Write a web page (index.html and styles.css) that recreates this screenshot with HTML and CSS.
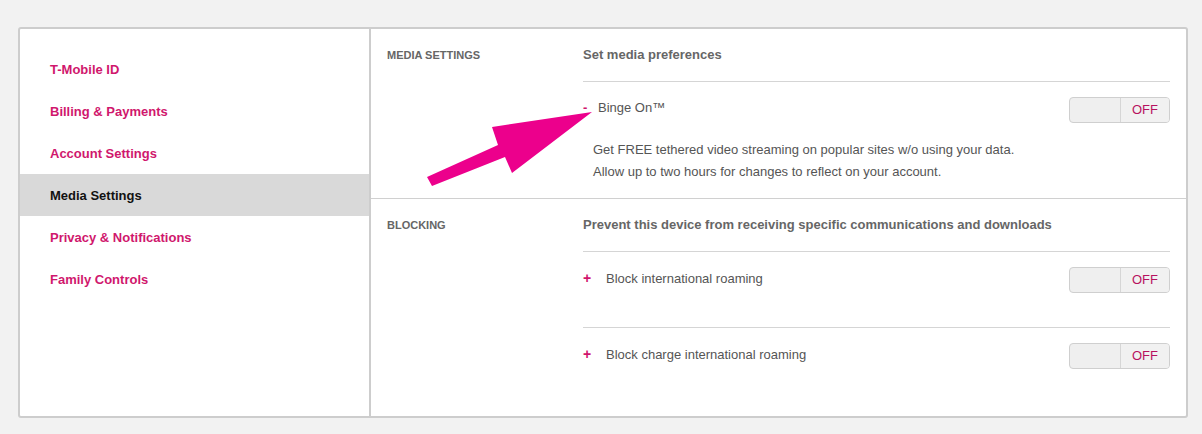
FILE: index.html
```html
<!DOCTYPE html>
<html lang="en">
<head>
  <meta charset="UTF-8" />
  <meta name="viewport" content="width=device-width, initial-scale=1.0" />
  <title>Media Settings</title>
  <link rel="stylesheet" href="styles.css">
</head>
<body>
  <div class="card">
    <!-- Side navigation -->
    <ul class="side-nav">
      <li><a href="#">T-Mobile ID</a></li>
      <li><a href="#">Billing &amp; Payments</a></li>
      <li><a href="#">Account Settings</a></li>
      <li class="active"><a href="#">Media Settings</a></li>
      <li><a href="#">Privacy &amp; Notifications</a></li>
      <li><a href="#">Family Controls</a></li>
    </ul>

    <!-- Settings panel -->
    <div class="panel">
      <section class="group">
        <div class="group-label">MEDIA SETTINGS</div>
        <div class="group-body">
          <h3 class="group-title">Set media preferences</h3>
          <div class="option">
            <div class="option-row">
              <span class="option-name"><span class="sign sign-minus">-</span>Binge On™</span>
              <span class="toggle"><span class="toggle-knob"></span><span class="toggle-state">OFF</span></span>
            </div>
            <p class="option-desc">Get FREE tethered video streaming on popular sites w/o using your data.<br>Allow up to two hours for changes to reflect on your account.</p>
          </div>
        </div>
      </section>

      <section class="group">
        <div class="group-label">BLOCKING</div>
        <div class="group-body">
          <h3 class="group-title">Prevent this device from receiving specific communications and downloads</h3>
          <div class="option option-line">
            <div class="option-row">
              <span class="option-name"><span class="sign">+</span>Block international roaming</span>
              <span class="toggle"><span class="toggle-knob"></span><span class="toggle-state">OFF</span></span>
            </div>
          </div>
          <div class="option">
            <div class="option-row">
              <span class="option-name"><span class="sign">+</span>Block charge international roaming</span>
              <span class="toggle"><span class="toggle-knob"></span><span class="toggle-state">OFF</span></span>
            </div>
          </div>
        </div>
      </section>
    </div>
  </div>

  <!-- Annotation arrow drawn over the page -->
  <svg class="annotation" width="1202" height="434" viewBox="0 0 1202 434">
    <polygon points="427,177 498,145 492,127 592,112 512,173 505,157 432,186" fill="#ec008c" />
  </svg>
</body>
</html>
```

FILE: styles.css
```css
/* Global Styles */
body {
  margin: 0;
  font-family: "Liberation Sans", Arial, sans-serif;
  background-color: #f2f2f2;
  color: #555;
  position: relative;
  height: 434px;
  overflow: hidden;
}
.card {
  display: flex;
  width: 1166px;
  min-height: 387px;
  margin: 27px 0 0 18px;
  background-color: #fff;
  border: 2px solid #cdcdcd;
  border-radius: 3px;
}
/* Side navigation */
.side-nav {
  list-style: none;
  margin: 0;
  padding: 19px 0 0;
  width: 349px;
  border-right: 2px solid #cdcdcd;
}
.side-nav li {
  height: 42px;
  display: flex;
  align-items: center;
  padding-left: 30px;
}
.side-nav a {
  color: #d0176d;
  font-size: 13px;
  font-weight: bold;
  text-decoration: none;
}
.side-nav li.active {
  background-color: #d9d9d9;
}
.side-nav li.active a {
  color: #111;
}
/* Settings panel */
.panel {
  flex: 1;
}
.group {
  display: grid;
  grid-template-columns: 196px 1fr;
  padding: 0 16px;
}
.group + .group {
  border-top: 1px solid #d0d0d0;
}
.group-label {
  padding-top: 18px;
  font-size: 11px;
  line-height: 16px;
  font-weight: bold;
  color: #666;
}
.group-title {
  margin: 0;
  padding: 18px 0 18px;
  font-size: 13px;
  line-height: 16px;
  font-weight: bold;
  color: #666;
  border-bottom: 1px solid #d5d5d5;
}
.option {
  padding: 15px 0 15px;
}
.option-line {
  padding-bottom: 34px;
  border-bottom: 1px solid #d5d5d5;
}
.option-row {
  display: flex;
  justify-content: space-between;
  align-items: flex-start;
}
.option-name {
  font-size: 13px;
  line-height: 22px;
  color: #555;
}
.sign {
  display: inline-block;
  width: 23px;
  color: #d0146c;
  font-weight: bold;
  font-size: 14px;
}
.sign-minus {
  width: 15px;
  font-size: 13px;
}
.option-desc {
  margin: 16px 0 0 10px;
  font-size: 13px;
  line-height: 22px;
  color: #555;
}
/* Toggle */
.toggle {
  display: flex;
  width: 99px;
  height: 24px;
  border: 1px solid #cfcfcf;
  border-radius: 4px;
  background-color: #efefef;
  overflow: hidden;
}
.toggle-knob {
  width: 50px;
  border-right: 1px solid #d6d6d6;
}
.toggle-state {
  flex: 1;
  text-align: center;
  font-size: 13px;
  line-height: 24px;
  color: #b8115f;
  background-color: #f1f1f1;
}
/* Annotation overlay */
.annotation {
  position: absolute;
  left: 0;
  top: 0;
  pointer-events: none;
}
```
